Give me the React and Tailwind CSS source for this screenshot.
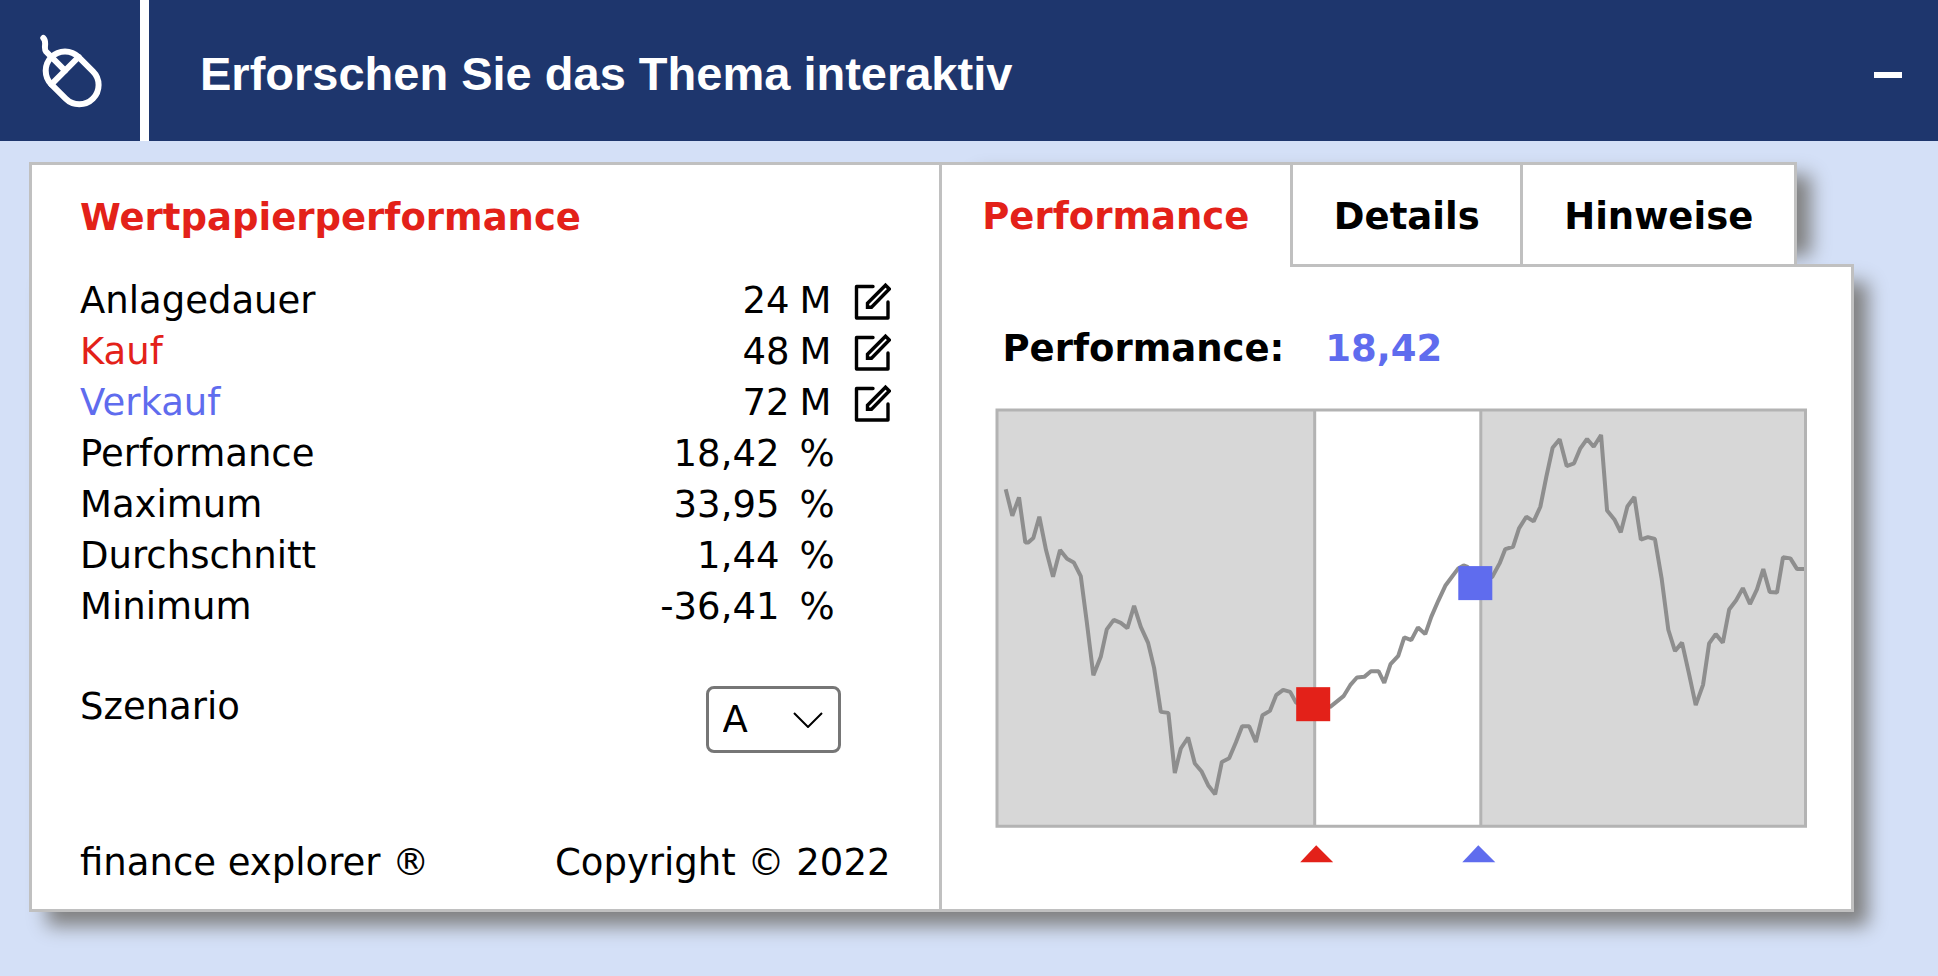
import { useState } from "react";

const ROWS = [
  { label: "Anlagedauer", value: "24", unit: "M", editable: true, tone: "" },
  { label: "Kauf", value: "48", unit: "M", editable: true, tone: "text-[#e32119]" },
  { label: "Verkauf", value: "72", unit: "M", editable: true, tone: "text-[#5f6cee]" },
  { label: "Performance", value: "18,42", unit: "%", tone: "" },
  { label: "Maximum", value: "33,95", unit: "%", tone: "" },
  { label: "Durchschnitt", value: "1,44", unit: "%", tone: "" },
  { label: "Minimum", value: "-36,41", unit: "%", tone: "" },
];

const TABS = ["Performance", "Details", "Hinweise"];

const PRICE_LINE =
  "10.7,81.3 17.3,107.7 24,89.3 30.3,134.3 33.3,134.3 38.3,130 44.3,108.7 51,142 58,168.7 65,142 72,150.7 78.7,154.3 85.7,168 91.7,213.7 98.3,267 105.7,248.7 111.7,221.3 118.7,211.7 125.7,214.7 132.3,220 139,197.7 145.7,218.7 153,234.7 159,259.7 165.7,303.7 173.3,304.7 179.7,364.7 185.7,340.3 193,329.3 199.7,355.3 206.3,363 213,377 220,386 226.7,353.7 234,350 240.7,334.3 247,318 254,318 260.7,333.7 267.3,307 274.7,302.7 281,287 288,281.7 295,283.7 301,294.7 318,297 335,298.7 348.3,288 355,277 361.7,269.3 369,268.7 375.7,263 383.3,263 389,274.7 395.3,256 403,247.7 409,229.3 416,232 422.7,219.3 430,226 436,208.7 443,192.7 450,177.7 456.7,168.7 463,160.3 468.3,157.3 472.3,158.7 480,175 497,168.7 504.3,155.3 510,141 517.7,138.7 523.7,120.3 531,108.7 538.3,113.3 545,98.7 551,68.7 557.3,39.7 564.3,31.3 571.3,58 578.7,55.3 585,40.3 591.7,31 598.3,38.7 605.7,27 611.7,102.5 619,111.4 625.4,124.3 632,98.5 639,89 645.5,131.6 652.5,129 659.5,130.9 666.2,170.2 672.9,221.6 679.6,242.9 686.6,234.5 693.6,265.7 700.3,296.9 707.6,276.7 713.7,235.2 720.3,226 727.4,234.5 733.7,201.4 740.7,192.2 747.4,180 754.5,195.9 761.5,181.2 767.8,161 774.2,183.8 781.5,184.5 787.5,149.2 794.9,150.3 801.6,161 809,161";

function MouseIcon() {
  return (
    <svg viewBox="0 0 64 76" className="h-[76px] w-16" fill="none" stroke="#fff" strokeWidth="6" strokeLinecap="round" aria-hidden="true">
      <path d="M4.300 4C8.500 8 4 14 7 17.500L26 36.700" />
      <rect x="13.850" y="14.450" width="38.600" height="58.800" rx="19.300" transform="rotate(-45 33.150 43.850)" />
      <path d="M39.600 23L12.400 50.300" />
    </svg>
  );
}

function EditIcon() {
  return (
    <svg viewBox="0 0 38 38" className="size-[38px]" fill="none" stroke="#000" strokeWidth="3.400" strokeLinecap="round" strokeLinejoin="round" aria-hidden="true">
      <path d="M20 4.500H3.500V36H35V20" />
      <path d="M14.500 25.300v-4L32.500 3.200l3.800 3.800L18.500 25.300z" strokeLinejoin="miter" />
    </svg>
  );
}

function PriceChart() {
  return (
    <svg viewBox="0 0 812 458" className="block w-full" role="img" aria-label="Kursverlauf">
      <rect x="2" y="2" width="808" height="416" fill="#d7d7d7" />
      <rect x="320" y="2" width="166" height="416" fill="#fff" />
      <polyline points={PRICE_LINE} fill="none" stroke="#8e8e8e" strokeWidth="4" strokeLinejoin="bevel" />
      <path d="M319.500 2V418M485.500 2V418" stroke="#b3b3b3" strokeWidth="3" />
      <rect x="2" y="2" width="808" height="416" fill="none" stroke="#b3b3b3" strokeWidth="3" />
      <rect x="301" y="279" width="34" height="34" fill="#e32119" />
      <rect x="463" y="158" width="34" height="34" fill="#5f6cee" />
      <path d="M305 454L321 437L338 454z" fill="#e32119" />
      <path d="M467 454L483 437L500 454z" fill="#5f6cee" />
    </svg>
  );
}

export default function App() {
  const [tab, setTab] = useState("Performance");

  return (
    <div className="min-h-screen bg-[#d4e0f7] font-['DejaVu_Sans',sans-serif] text-[37px] leading-[51px] text-black">
      <header className="flex h-[141px] items-stretch bg-[#1e366d] text-white">
        <div className="flex w-[149px] shrink-0 items-center border-r-9 border-white pt-[3px] pl-[39px]">
          <MouseIcon />
        </div>
        <div className="flex flex-1 items-center justify-between pt-[9px] pr-9 pl-[51px]">
          <h1 className="pb-1 font-['Liberation_Sans',Arial,sans-serif] text-[47px] font-bold">Erforschen Sie das Thema interaktiv</h1>
          <button type="button" aria-label="Einklappen" className="py-4">
            <span className="block h-1.5 w-7 bg-white" />
          </button>
        </div>
      </header>

      <main className="relative isolate mt-[21px] mr-[84px] ml-[29px] grid grid-cols-2">
        <div aria-hidden="true" className="absolute inset-x-0 top-[102px] bottom-0 -z-10 shadow-[16px_16px_18px_-2px_#808080]" />

        <section className="flex flex-col border-[3px] border-[#c0c0c0] bg-white pr-12 pb-[21px] pl-12">
          <h2 className="mt-[27px] font-bold text-[#e32119]">Wertpapierperformance</h2>
          <table className="mt-8 w-full">
            <tbody>
              {ROWS.map((row) => (
                <tr key={row.label}>
                  <th scope="row" className={"p-0 text-left font-normal " + row.tone}>{row.label}</th>
                  <td className={row.unit === "%" ? "p-0 pr-5 text-right" : "p-0 pr-2.5 text-right"}>{row.value}</td>
                  <td className="w-[53px] p-0">{row.unit}</td>
                  <td className="w-[38px] p-0">
                    {row.editable && (
                      <button type="button" aria-label={row.label + " bearbeiten"} className="block">
                        <EditIcon />
                      </button>
                    )}
                  </td>
                </tr>
              ))}
            </tbody>
          </table>
          <div className="mt-[49px] flex items-start justify-between pr-[50px]">
            <label htmlFor="szenario">Szenario</label>
            <div className="relative mt-[5px]">
              <select id="szenario" defaultValue="A" className="block h-[67px] w-[135px] appearance-none rounded-lg border-[3px] border-[#767676] bg-white pl-[14px]">
                <option>A</option>
                <option>B</option>
                <option>C</option>
              </select>
              <svg viewBox="0 0 30 16" className="pointer-events-none absolute top-[26px] right-[18px] h-4 w-[30px]" fill="none" stroke="#000" strokeWidth="2" aria-hidden="true">
                <path d="M1 1L15 15L29 1" />
              </svg>
            </div>
          </div>
          <footer className="mt-auto flex justify-between pt-[84px]">
            <span>finance explorer ®</span>
            <span>Copyright © 2022</span>
          </footer>
        </section>

        <div className="-ml-[3px] flex flex-col">
          <div role="tablist" className="mr-[57px] flex h-[105px] shadow-[26px_1px_18px_-12px_#808080]">
            {TABS.map((name) => (
              <button
                key={name}
                type="button"
                role="tab"
                aria-selected={tab === name}
                onClick={() => setTab(name)}
                className={
                  name === tab
                    ? "relative z-10 flex-auto border-t-[3px] border-l-[3px] border-[#c0c0c0] bg-white px-10 font-bold text-[#e32119] last:border-r-[3px]"
                    : "flex-auto border-t-[3px] border-l-[3px] border-[#c0c0c0] bg-white px-10 font-bold last:border-r-[3px]"
                }
              >
                {name}
              </button>
            ))}
          </div>
          <div role="tabpanel" className="-mt-[3px] flex-1 border-[3px] border-[#c0c0c0] bg-white pr-11 pb-10 pl-[53px]">
            <p className="mt-14 pl-2 font-bold">
              Performance: <span className="ml-7 text-[#5f6cee]">18,42</span>
            </p>
            <div className="mt-[34px]">
              <PriceChart />
            </div>
          </div>
        </div>
      </main>
    </div>
  );
}
